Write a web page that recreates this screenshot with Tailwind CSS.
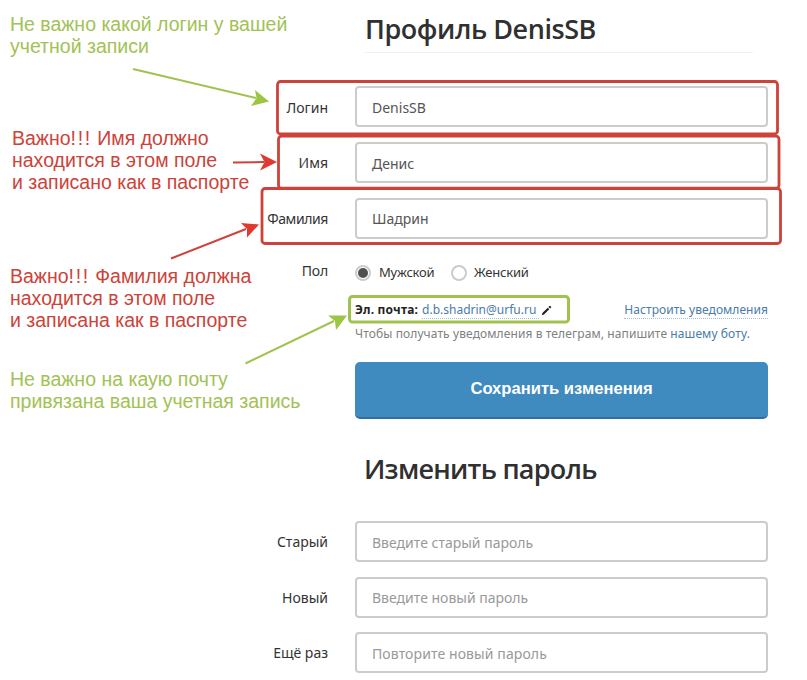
<!DOCTYPE html>
<html lang="ru">
<head>
<meta charset="utf-8">
<title>Профиль</title>
<script src="https://cdn.jsdelivr.net/npm/@tailwindcss/browser@4"></script>
</head>
<body class="bg-white">
<div class="relative w-[807px] h-[680px] overflow-hidden font-['Noto_Sans','Open_Sans',sans-serif] text-[14px] text-[#333]">
  <main class="flex flex-col w-[768px] pl-[255px]">
    <h1 class="ml-[110px] w-[388px] h-[53px] pt-[10px] border-b border-[#f0f0f0] text-[27px] leading-[38px] font-semibold font-['Open_Sans','Noto_Sans',sans-serif] text-[#303030] whitespace-nowrap tracking-[-0.45px]">Профиль DenisSB</h1>
    <form class="flex flex-col">
      <div class="flex flex-col gap-[14.6px] pt-[33.4px]">
        <div class="flex h-[41px] items-center"><label class="w-[73px] mr-[27px] pt-px text-right whitespace-nowrap">Логин</label><div class="flex-1 h-full border-2 border-[#ccc] rounded-[4px] pl-[15px] pt-[1.5px] flex items-center text-[#555]">DenisSB</div></div>
        <div class="flex h-[41px] items-center"><label class="w-[73px] mr-[27px] pt-px text-right whitespace-nowrap">Имя</label><div class="flex-1 h-full border-2 border-[#ccc] rounded-[4px] pl-[15px] pt-[1.5px] flex items-center text-[#555]">Денис</div></div>
        <div class="flex h-[41px] items-center"><label class="w-[73px] mr-[27px] text-right whitespace-nowrap tracking-[-0.4px]">Фамилия</label><div class="flex-1 h-full border-2 border-[#ccc] rounded-[4px] pl-[15px] flex items-center text-[#555]">Шадрин</div></div>
      </div>
      <div class="flex mt-[22px] h-[22px] text-[13px] tracking-[-0.2px]">
        <span class="w-[73px] mr-[27px] text-right text-[14px] leading-5">Пол</span>
        <span class="flex w-[96px] pt-[3px] items-center gap-[8px]"><i class="size-4 rounded-full border-2 border-[#ccc] p-px"><b class="block size-full rounded-full bg-[#505050]"></b></i>Мужской</span>
        <span class="flex items-center pt-[3px] gap-[7px]"><i class="size-4 rounded-full border-2 border-[#ccc]"></i>Женский</span>
      </div>
      <div class="ml-[100px] mt-[17.5px] h-[20px] flex items-center text-[12px] whitespace-nowrap">
        <b class="text-[#222] text-[12px] mr-[4px] tracking-[0.2px]">Эл. почта:</b>
        <a class="text-[#4a7baa] border-b border-dotted border-[#a5bdd5] leading-4 w-[117px]">d.b.shadrin@urfu.ru</a>
        <svg class="ml-[2px] size-[11px]" viewBox="0 0 11 11"><path d="M.8 10.3 1.4 8 6.7 2.7 8.3 4.3 3 9.5ZM7.4 2 8.5.9Q8.9.5 9.3.9L10.1 1.7Q10.5 2.1 10.1 2.5L9 3.6Z" fill="#222"/></svg>
        <a class="ml-auto text-[#4a7baa] border-b border-dotted border-[#a5bdd5] leading-4 tracking-[0.05px]">Настроить уведомления</a>
      </div>
      <p class="ml-[100px] mt-[4px] h-5 leading-5 text-[12px] tracking-[0.1px] text-[#808080] whitespace-nowrap">Чтобы получать уведомления в телеграм, напишите <a class="text-[#4a7baa]">нашему боту.</a></p>
      <button type="button" class="ml-[100px] mt-[18px] h-[57px] rounded-[5px] bg-[#3f8abf] border-b-2 border-[#316f9c] text-white text-[16.6px] font-bold font-['Liberation_Sans',sans-serif]">Сохранить изменения</button>
    </form>
    <h2 class="ml-[109px] mt-[30.5px] h-[38px] text-[27px] leading-[38px] font-semibold font-['Open_Sans','Noto_Sans',sans-serif] text-[#303030] whitespace-nowrap tracking-[-0.75px]">Изменить пароль</h2>
    <form class="flex flex-col gap-[14.6px] pt-[33.4px]">
      <div class="flex h-[41px] items-center"><label class="w-[73px] mr-[27px] text-right whitespace-nowrap">Старый</label><div class="flex-1 h-full border-2 border-[#ccc] rounded-[4px] pl-[15px] pt-[1.5px] flex items-center text-[#999]">Введите старый пароль</div></div>
      <div class="flex h-[41px] items-center"><label class="w-[73px] mr-[27px] text-right whitespace-nowrap">Новый</label><div class="flex-1 h-full border-2 border-[#ccc] rounded-[4px] pl-[15px] pt-[1.5px] flex items-center text-[#999]">Введите новый пароль</div></div>
      <div class="flex h-[41px] items-center"><label class="w-[73px] mr-[27px] text-right whitespace-nowrap">Ещё раз</label><div class="flex-1 h-full border-2 border-[#ccc] rounded-[4px] pl-[15px] pt-[1.5px] flex items-center text-[#999] tracking-[0.1px]">Повторите новый пароль</div></div>
    </form>
  </main>

  <!-- Annotations over the form -->
  <svg class="absolute inset-0" width="807" height="680" viewBox="0 0 807 680" fill="none">
    <g stroke="#cd4239" stroke-width="2.8">
      <rect x="277.5" y="81.5" width="500" height="52.5" rx="3"/>
      <rect x="278.5" y="136.2" width="500.5" height="52" rx="3"/>
      <rect x="262" y="188.5" width="518.5" height="55" rx="3"/>
    </g>
    <rect x="349.5" y="296.5" width="219" height="25.5" rx="3" stroke="#a2c24f" stroke-width="3"/>
    <g stroke-width="2">
      <path d="M133 69 256 98" stroke="#a2c24f"/>
      <path d="M233 162.5 264 162" stroke="#cd4239"/>
      <path d="M171 258.5 246 229" stroke="#cd4239"/>
      <path d="M245.5 363.5 334 321" stroke="#a2c24f"/>
    </g>
    <path d="M269 101.5 255 90 256.5 98 251 106Z" fill="#9bc543"/>
    <path d="M277 162 260 153.5 264.5 162 260 170.5Z" fill="#e0392f"/>
    <path d="M259 224.5 241 223 247 229 247 237.5Z" fill="#e0392f"/>
    <path d="M347 315.5 328 315.5 335 321 336 330Z" fill="#9bc543"/>
  </svg>
  <div class="absolute left-[10px] top-[13px] font-['Liberation_Sans',sans-serif] text-[19.5px] leading-[22.2px] text-[#a2c255] whitespace-nowrap">Не важно какой логин у вашей<br>учетной записи</div>
  <div class="absolute left-[12px] top-[127px] font-['Liberation_Sans',sans-serif] text-[19.5px] leading-[22.2px] text-[#cd4239] whitespace-nowrap">Важно<span class="tracking-[1.7px]">!!!</span> Имя должно<br>находится в этом поле<br>и записано как в паспорте</div>
  <div class="absolute left-[10px] top-[265px] font-['Liberation_Sans',sans-serif] text-[19.5px] leading-[22.2px] text-[#cd4239] whitespace-nowrap">Важно<span class="tracking-[1.7px]">!!!</span> Фамилия должна<br>находится в этом поле<br>и записана как в паспорте</div>
  <div class="absolute left-[10px] top-[368px] font-['Liberation_Sans',sans-serif] text-[19.5px] leading-[22.2px] text-[#a2c255] whitespace-nowrap">Не важно на каую почту<br>привязана ваша учетная запись</div>
</div>
</body>
</html>
